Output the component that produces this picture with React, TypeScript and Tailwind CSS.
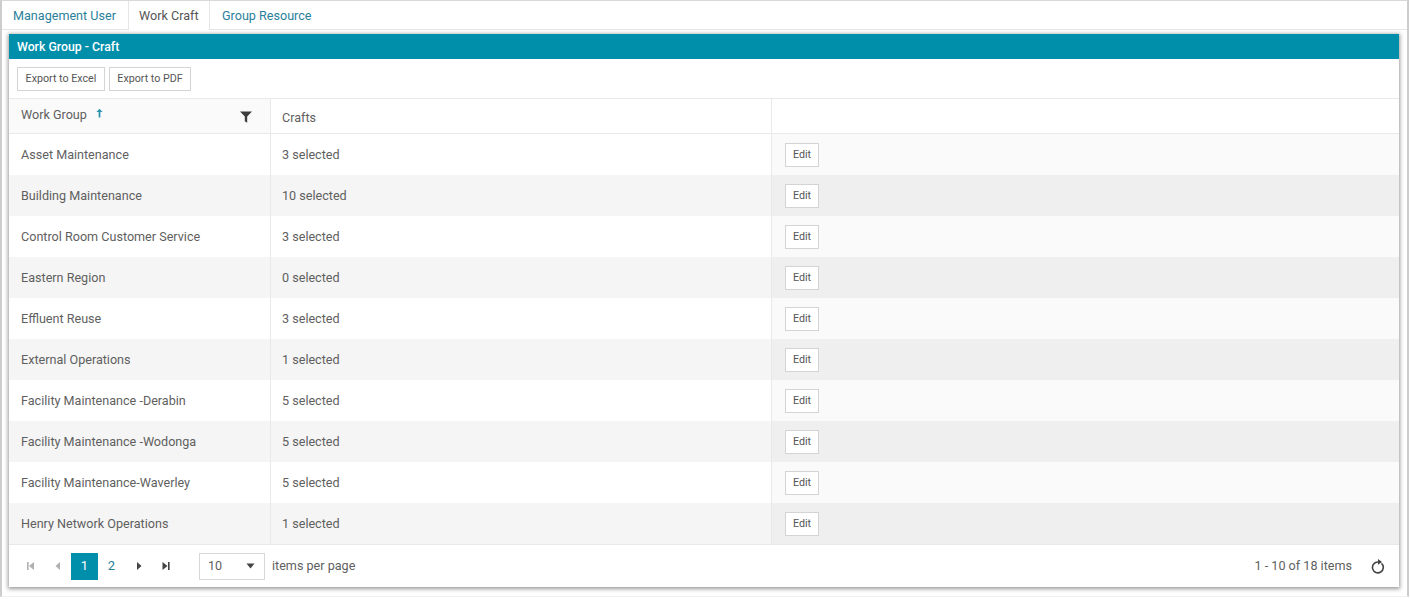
import React from "react";

const rows = [
  ["Asset Maintenance", "3 selected"],
  ["Building Maintenance", "10 selected"],
  ["Control Room Customer Service", "3 selected"],
  ["Eastern Region", "0 selected"],
  ["Effluent Reuse", "3 selected"],
  ["External Operations", "1 selected"],
  ["Facility Maintenance -Derabin", "5 selected"],
  ["Facility Maintenance -Wodonga", "5 selected"],
  ["Facility Maintenance-Waverley", "5 selected"],
  ["Henry Network Operations", "1 selected"],
];

function Pager({ d, color }: { d: string; color: string }) {
  return (
    <svg width="10" height="10" viewBox="0 0 10 10" className={color} fill="currentColor">
      <path d={d} />
    </svg>
  );
}

export default function App() {
  return (
    <div className="w-[1410px] h-[599px] bg-white overflow-hidden font-['Roboto',sans-serif] text-[12.6px] text-[#5f5f5f]">
      <div className="w-[1409px] h-[597px] border border-l-2 border-r-2 border-[#cdcdcd] border-b-[#f0f0f0] border-t-[#d8d8d8] flex flex-col">
        <div className="h-[29px] shrink-0 flex border-b border-[#e6e6e6] pl-[1px]">
          <div className="w-[125px] pl-[10px] pt-[6px] text-[#2a7f9b]">Management User</div>
          <div className="w-[82px] h-[29px] pl-[10px] pt-[6px] bg-white border-x border-[#e6e6e6] text-[#555]">Work Craft</div>
          <div className="pl-[12px] pt-[6px] text-[#2a7f9b]">Group Resource</div>
        </div>
        <div className="mt-[4px] ml-[7px] w-[1390px] h-[553px] bg-white flex flex-col shadow-[0_1px_4px_1px_rgba(0,0,0,0.4)]">
          <div className="h-[25px] shrink-0 bg-[#008fab] text-white font-medium text-[12.3px] pl-[8px] leading-[26px]">Work Group - Craft</div>
          <div className="h-[40px] shrink-0 flex items-start gap-[4px] pl-[8px] pt-[8px] border-b border-[#e9e9e9]">
            <div className="h-[24px] w-[88px] text-center border border-[#d4d4d4] text-[10.7px] leading-[22px] text-[#555]">Export to Excel</div>
            <div className="h-[24px] w-[82px] text-center border border-[#d4d4d4] text-[10.7px] leading-[22px] text-[#555]">Export to PDF</div>
          </div>
          <div className="h-[35px] shrink-0 flex border-b border-[#e9e9e9]">
            <div className="w-[262px] relative pl-[12px] pt-[7px] bg-[#fafafa] border-r border-[#e9e9e9]">
              <span>Work Group</span>
              <svg className="absolute left-[87px] top-[9px] text-[#2a93ad]" width="7" height="10" viewBox="0 0 8 10" fill="currentColor">
                <path d="M4 0 L7.5 3.8 H5 V10 H3 V3.8 H0.5 Z" />
              </svg>
              <svg className="absolute left-[231px] top-[12px] text-[#3c3c3c]" width="12" height="12" viewBox="0 0 12 12" fill="currentColor">
                <path d="M0 0.5 H12 L7.2 5.5 V11.8 L4.8 10.2 V5.5 Z" />
              </svg>
            </div>
            <div className="w-[501px] pl-[11px] pt-[10px] border-r border-[#e9e9e9]">Crafts</div>
            <div className="flex-1" />
          </div>
          {rows.map((r, i) => (
            <div key={r[0]} className={`h-[41px] shrink-0 flex items-center ${i % 2 ? "bg-[#f5f5f5]" : "bg-white"}`}>
              <div className="w-[262px] h-full pl-[12px] pt-[2px] flex items-center border-r border-[#e9e9e9]">{r[0]}</div>
              <div className="w-[501px] h-full pl-[11px] pt-[2px] flex items-center border-r border-[#e9e9e9]">{r[1]}</div>
              <div className={`flex-1 h-full pl-[13px] flex items-center ${i % 2 ? "bg-[#efefef]" : "bg-[#fafafa]"}`}>
                <div className="w-[34px] h-[24px] bg-white border border-[#d4d4d4] text-[10.7px] leading-[22px] text-center text-[#555]">Edit</div>
              </div>
            </div>
          ))}
          <div className="flex-1 flex items-center pl-[8px] border-t border-[#e9e9e9] relative">
            <div className="w-[27px] flex justify-center"><Pager color="text-[#b0b0b0]" d="M1 1H2.6V9H1ZM8 1V9L3 5Z" /></div>
            <div className="w-[27px] flex justify-center"><Pager color="text-[#b0b0b0]" d="M7 1V9L2.5 5Z" /></div>
            <div className="w-[27px] h-[27px] bg-[#008fab] text-white flex items-center justify-center text-[13px]">1</div>
            <div className="w-[27px] h-[27px] text-[#2a7f9b] flex items-center justify-center text-[13px]">2</div>
            <div className="w-[27px] flex justify-center"><Pager color="text-[#444]" d="M3 1V9L7.5 5Z" /></div>
            <div className="w-[27px] flex justify-center"><Pager color="text-[#444]" d="M1.5 1V9L6.5 5ZM7 1H8.6V9H7Z" /></div>
            <div className="ml-[20px] w-[66px] h-[27px] border border-[#d8d8d8] flex items-center justify-between pl-[8px] pr-[9px]">
              <span>10</span>
              <svg width="9" height="6" viewBox="0 0 9 6" className="text-[#444]" fill="currentColor"><path d="M0.5 0.5H8.5L4.5 5.5Z" /></svg>
            </div>
            <span className="ml-[7px]">items per page</span>
            <span className="ml-auto">1 - 10 of 18 items</span>
            <svg className="ml-[19px] mr-[13px] text-[#444]" width="15" height="15" viewBox="0 0 15 15" fill="none" stroke="currentColor" strokeWidth="1.6">
              <path d="M10.5 4.4 A5.4 5.4 0 1 1 7 3.02" />
              <path d="M7 0 L11 2.9 L7 5.8 Z" fill="currentColor" stroke="none" />
            </svg>
          </div>
        </div>
      </div>
    </div>
  );
}
